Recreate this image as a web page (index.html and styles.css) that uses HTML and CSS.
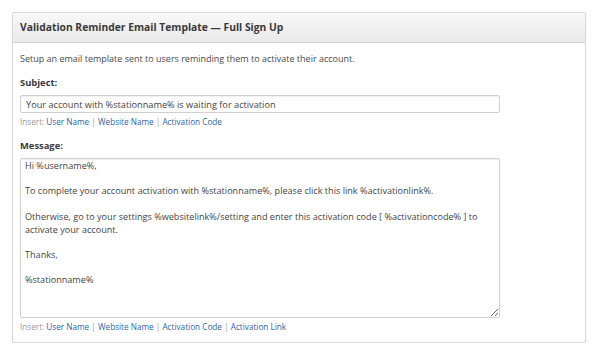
FILE: index.html
```html
<!DOCTYPE html>
<html>
<head>
<meta charset="utf-8">
<link rel="stylesheet" href="styles.css">
</head>
<body>
<div class="panel">
  <div class="panel-header">Validation Reminder Email Template — Full Sign Up</div>
  <div class="panel-body">
    <p class="desc">Setup an email template sent to users reminding them to activate their account.</p>
    <label class="field-label">Subject:</label>
    <input class="text-input" type="text" value="Your account with %stationname% is waiting for activation">
    <div class="insert">Insert: <a href="#">User Name</a> <span class="sep">|</span> <a href="#">Website Name</a> <span class="sep">|</span> <a href="#">Activation Code</a></div>
    <label class="field-label msg-label">Message:</label>
    <textarea class="text-area">Hi %username%,

To complete your account activation with %stationname%, please click this link %activationlink%.

Otherwise, go to your settings %websitelink%/setting and enter this activation code [ %activationcode% ] to activate your account.

Thanks,

%stationname%</textarea>
    <div class="insert">Insert: <a href="#">User Name</a> <span class="sep">|</span> <a href="#">Website Name</a> <span class="sep">|</span> <a href="#">Activation Code</a> <span class="sep">|</span> <a href="#">Activation Link</a></div>
  </div>
</div>
</body>
</html>
```
FILE: styles.css
```css
html, body {
  margin: 0;
  padding: 0;
  background: #ffffff;
}
body {
  padding: 12px 0 0 12px;
  font-family: "Open Sans", "Liberation Sans", sans-serif;
  color: #444;
}
.panel {
  width: 572px;
  border: 1px solid #d8d8d8;
  border-radius: 2px;
  box-shadow: 0 1px 2px rgba(0,0,0,0.08);
  background: #fff;
}
.panel-header {
  height: 29px;
  line-height: 29px;
  padding-left: 7px;
  font-size: 10.3px;
  font-weight: 700;
  color: #3a3a3a;
  background: linear-gradient(#f8f8f8, #e9e9e9);
  border-bottom: 1px solid #d2d2d2;
}
.panel-body {
  padding: 10px 0 10px 7px;
  display: flex;
  flex-direction: column;
  align-items: flex-start;
}
.desc {
  margin: 0;
  font-size: 9px;
  line-height: 12px;
  color: #4a4a4a;
}
.field-label {
  margin-top: 12px;
  font-size: 9.4px;
  font-weight: 700;
  line-height: 12px;
  color: #3a3a3a;
}
.msg-label {
  margin-top: 13px;
}
.text-input {
  box-sizing: border-box;
  margin: 6px 0 0 0;
  width: 480px;
  height: 18px;
  padding: 0 5px;
  border: 1px solid #cfcfcf;
  border-radius: 2px;
  box-shadow: inset 0 1px 1px rgba(0,0,0,0.06);
  font-family: "Open Sans", "Liberation Sans", sans-serif;
  font-size: 9.2px;
  color: #444;
  outline: none;
}
.text-area {
  box-sizing: border-box;
  margin: 6px 0 0 0;
  width: 480px;
  height: 160px;
  padding: 1px 4px;
  border: 1px solid #cfcfcf;
  border-radius: 2px;
  box-shadow: inset 0 1px 1px rgba(0,0,0,0.06);
  font-family: "Open Sans", "Liberation Sans", sans-serif;
  font-size: 9.1px;
  line-height: 12.7px;
  color: #444;
  resize: both;
  outline: none;
}
.insert {
  margin-top: 4px;
  font-size: 8.2px;
  line-height: 10px;
  color: #9a9a9a;
}
.insert a {
  color: #2f65a8;
  text-decoration: none;
}
.insert .sep {
  color: #9a9a9a;
}
```
